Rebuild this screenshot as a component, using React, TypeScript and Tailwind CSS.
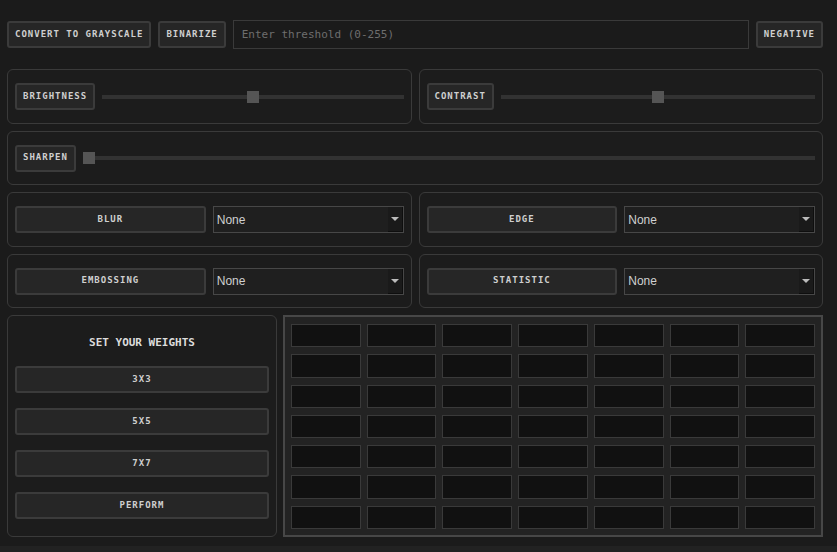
import { useState } from "react";

const mono = "font-['DejaVu_Sans_Mono','Liberation_Mono',monospace]";

function Btn({ label, className = "" }: { label: string; className?: string }) {
  return (
    <button
      className={`h-[27px] border-2 border-[#3b3b3b] bg-[#262626] rounded-[3px] px-[6px] text-[9px] font-bold tracking-[1px] text-[#cfcfcf] ${mono} ${className}`}
    >
      {label}
    </button>
  );
}

function Panel({ children, className = "" }: { children: React.ReactNode; className?: string }) {
  return (
    <div className={`border border-[#3a3a3a] rounded-[6px] bg-[#1c1c1c] ${className}`}>
      {children}
    </div>
  );
}

function Slider({ pos }: { pos: number }) {
  return (
    <div className="relative flex-1 h-[12px] flex items-center">
      <div className="w-full h-[4px] bg-[#323232]" />
      <div
        className="absolute top-0 w-[12px] h-[12px] bg-[#555]"
        style={{ left: `calc(${pos}% - ${(pos / 100) * 12}px)` }}
      />
    </div>
  );
}

function Select() {
  return (
    <div className="relative h-[27px] border border-[#474747] bg-[#1f1f1f] flex items-center">
      <span className="pl-[3px] text-[12px] text-[#d0d0d0] font-['Liberation_Sans','Noto_Sans',sans-serif]">None</span>
      <div className="absolute right-0 top-0 bottom-0 w-[15px] bg-[#1a1a1a] border-r border-b border-[#0e0e0e] flex items-center justify-center">
        <div className="w-0 h-0 border-l-[4px] border-r-[4px] border-t-[4px] border-l-transparent border-r-transparent border-t-[#bbb]" />
      </div>
    </div>
  );
}

function FilterPanel({ label, h }: { label: string; h: string }) {
  return (
    <Panel className={`flex-1 ${h} px-[7px] grid grid-cols-2 gap-[7px] items-center`}>
      <Btn label={label} />
      <Select />
    </Panel>
  );
}

export default function App() {
  const [cells] = useState(() => Array.from({ length: 49 }, (_, i) => i));

  return (
    <div className="min-h-screen bg-[#222]">
      <div className="h-[546px] bg-[#1b1b1b] pt-[20px] pl-[7px] pr-[14px] flex flex-col gap-[7px]">
        <div className="flex items-center gap-[7px] mb-[13px]">
          <Btn label="CONVERT TO GRAYSCALE" className="px-[5px] shrink-0" />
          <Btn label="BINARIZE" className="shrink-0" />
          <input
            placeholder="Enter threshold (0-255)"
            className={`flex-1 min-w-0 h-[29px] border border-[#3a3a3a] bg-[#1b1b1b] px-[8px] text-[11px] text-[#ccc] placeholder:text-[#6e6e6e] outline-none ${mono}`}
          />
          <Btn label="NEGATIVE" className="shrink-0" />
        </div>

        <div className="flex gap-[7px]">
          <Panel className="flex-1 h-[55px] px-[7px] flex items-center gap-[7px]">
            <Btn label="BRIGHTNESS" />
            <Slider pos={50} />
          </Panel>
          <Panel className="flex-1 h-[55px] px-[7px] flex items-center gap-[7px]">
            <Btn label="CONTRAST" />
            <Slider pos={50} />
          </Panel>
        </div>

        <Panel className="h-[54px] px-[7px] flex items-center gap-[7px]">
          <Btn label="SHARPEN" />
          <Slider pos={0} />
        </Panel>

        <div className="flex gap-[7px]">
          <FilterPanel label="BLUR" h="h-[55px]" />
          <FilterPanel label="EDGE" h="h-[55px]" />
        </div>

        <div className="flex gap-[7px]">
          <FilterPanel label="EMBOSSING" h="h-[54px]" />
          <FilterPanel label="STATISTIC" h="h-[54px]" />
        </div>

        <div className="flex gap-[6px] h-[222px]">
          <Panel className="w-[270px] px-[7px] pt-[19px] flex flex-col gap-[15px]">
            <h2 className={`text-center text-[11px] font-bold text-[#dcdcdc] leading-[16px] ${mono}`}>
              SET YOUR WEIGHTS
            </h2>
            <Btn label="3X3" className="w-full" />
            <Btn label="5X5" className="w-full" />
            <Btn label="7X7" className="w-full" />
            <Btn label="PERFORM" className="w-full" />
          </Panel>

          <div className="flex-1 border-2 border-[#474747] bg-[#232323] p-[6px] pt-[7px] grid grid-cols-7 grid-rows-7 gap-x-[6px] gap-y-[7px]">
            {cells.map((i) => (
              <div key={i} className="border border-[#3a3a3a] bg-[#111]" />
            ))}
          </div>
        </div>
      </div>
    </div>
  );
}
